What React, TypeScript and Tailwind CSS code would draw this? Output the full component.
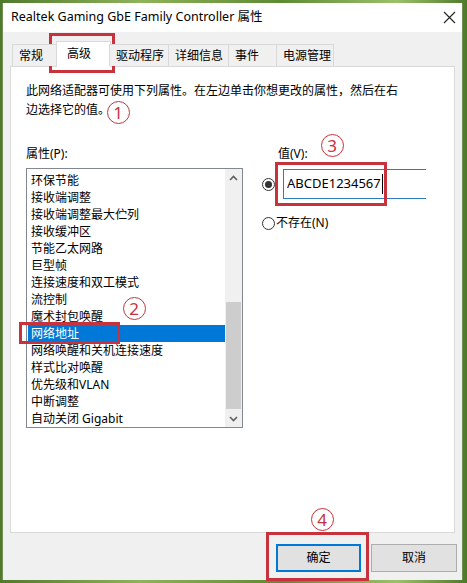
import React from "react"

const items = [
  "环保节能",
  "接收端调整",
  "接收端调整最大伫列",
  "接收缓冲区",
  "节能乙太网路",
  "巨型帧",
  "连接速度和双工模式",
  "流控制",
  "魔术封包唤醒",
  "网络地址",
  "网络唤醒和关机连接速度",
  "样式比对唤醒",
  "优先级和VLAN",
  "中断调整",
  "自动关闭 Gigabit",
]

const font = { fontFamily: '"Noto Sans", "Noto Sans CJK SC", sans-serif' }

function Chevron({ up }: { up?: boolean }) {
  return (
    <svg width="9" height="6" viewBox="0 0 9 6">
      <path
        d={up ? "M1 5 L4.5 1.5 L8 5" : "M1 1 L4.5 4.5 L8 1"}
        fill="none"
        stroke="#606060"
        strokeWidth="1.6"
      />
    </svg>
  )
}

function Radio({ checked }: { checked?: boolean }) {
  return (
    <div className="w-[13px] h-[13px] shrink-0 rounded-full border border-[#333] bg-white flex items-center justify-center">
      {checked && <div className="w-[7px] h-[7px] rounded-full bg-[#333]" />}
    </div>
  )
}

function Mark({ n, x, y }: { n: string; x: number; y: number }) {
  return (
    <div
      className="absolute w-[23px] h-[23px] rounded-full border-[1.5px] border-[#c8323c] flex items-center justify-center text-[17px] leading-none text-[#c8323c]"
      style={{ left: x - 11.5, top: y - 11.5, ...font }}
    >
      {n}
    </div>
  )
}

export default function App() {
  const tabs = [
    { label: "常规", w: "w-[46px]" },
    { label: "高级", w: "w-[55px]", active: true },
    { label: "驱动程序", w: "w-[59px]" },
    { label: "详细信息", w: "w-[60px]" },
    { label: "事件", w: "w-[48px]" },
    { label: "电源管理", w: "w-[58px]" },
  ]

  return (
    <div
      className="relative w-[467px] h-[583px] overflow-hidden bg-[linear-gradient(90deg,#4f7a2c,#8fb35a_30%,#5d8a34_60%,#9cc06a_85%,#4c7a2a)] pt-[3px] pl-[2px]"
      style={font}
    >
      <div className="w-[461px] h-[577px] flex flex-col bg-[#f0f0f0] border-l border-r border-[#6f8f55]">
        {/* title bar */}
        <div className="h-[29px] bg-white flex items-center justify-between pl-[8px] pr-[6px]">
          <span className="text-[12.5px] text-black">
            Realtek Gaming GbE Family Controller 属性
          </span>
          <svg width="13" height="13" viewBox="0 0 13 13">
            <path d="M1 1 L12 12 M12 1 L1 12" stroke="#222" strokeWidth="1.1" />
          </svg>
        </div>

        <div className="flex-1 flex flex-col px-[7px] pt-[9px]">
          {/* tabs */}
          <div className="relative z-10 h-[25px] flex items-end pl-[2px] text-[12px] text-black">
            {tabs.map((t) =>
              t.active ? (
                <div
                  key={t.label}
                  className={`${t.w} h-[26px] -mx-[2px] -mb-px bg-white border border-b-0 border-[#d9d9d9] pl-[10px] pt-[3px]`}
                >
                  {t.label}
                </div>
              ) : (
                <div
                  key={t.label}
                  className={`${t.w} h-[22px] bg-[#f0f0f0] border border-r-0 last:border-r border-b-0 border-[#d9d9d9] flex items-center pl-[6px]`}
                >
                  {t.label}
                </div>
              )
            )}
          </div>

          {/* panel */}
          <div className="h-[467px] bg-white border border-[#d9d9d9] pl-[15px] pt-[14px] text-black">
            <div className="text-[12px] leading-[19px]">
              <div className="w-fit">此网络适配器可使用下列属性。在左边单击你想更改的属性，然后在右</div>
              <div className="w-fit">边选择它的值。</div>
            </div>

            <div className="flex mt-[26px]">
              <div className="w-[217px]">
                <div className="text-[12px] leading-[18px] mb-[5px]">属性(P):</div>
                <div className="h-[260px] border border-[#828790] flex">
                  <div className="flex-1 pt-[3px] pl-px text-[12px] leading-[17px]">
                    {items.map((it) => (
                      <div
                        key={it}
                        className={
                          it === "网络地址"
                            ? "h-[17px] pl-[3px] bg-[#0078d7] text-white"
                            : "h-[17px] pl-[3px]"
                        }
                      >
                        {it}
                      </div>
                    ))}
                  </div>
                  <div className="w-[17px] bg-[#f0f0f0] flex flex-col">
                    <div className="h-[17px] flex items-center justify-center">
                      <Chevron up />
                    </div>
                    <div className="flex-1 pt-[116px] px-px">
                      <div className="h-[107px] bg-[#cdcdcd]" />
                    </div>
                    <div className="h-[17px] flex items-center justify-center">
                      <Chevron />
                    </div>
                  </div>
                </div>
              </div>

              <div className="ml-[19px] flex-1">
                <div className="text-[12px] leading-[18px] ml-[16px]">值(V):</div>
                <div className="flex items-center mt-[6px]">
                  <Radio checked />
                  <div className="ml-[8px] w-[143px] h-[30px] border-l border-t border-b border-[#2f7bbf] flex items-center pl-[3px] text-[13px]">
                    ABCDE1234567
                    <span className="ml-px w-px h-[20px] bg-black" />
                  </div>
                </div>
                <div className="flex items-center mt-[16px] text-[12px] leading-[16px]">
                  <Radio />
                  <span className="ml-[1px]">不存在(N)</span>
                </div>
              </div>
            </div>
          </div>

          {/* buttons */}
          <div className="flex justify-end gap-[10px] mt-[11px] -mr-[2px] text-[12px] text-black">
            <div className="w-[85px] h-[28px] bg-[#e1e1e1] border-2 border-[#0078d7] flex items-center justify-center">
              确定
            </div>
            <div className="w-[86px] h-[28px] bg-[#e1e1e1] border border-[#adadad] flex items-center justify-center">
              取消
            </div>
          </div>
        </div>
      </div>

      {/* annotations */}
      <div className="absolute left-[49px] top-[33px] w-[66px] h-[40px] border-[3px] border-[#c8323c]" />
      <div className="absolute left-[19px] top-[322px] w-[101px] h-[22px] border-[3px] border-[#c8323c]" />
      <div className="absolute left-[275px] top-[162px] w-[112px] h-[44px] border-[3px] border-[#c8323c]" />
      <div className="absolute left-[266px] top-[532px] w-[103px] h-[49px] border-[3px] border-[#c8323c]" />
      <Mark n="1" x={118} y={112} />
      <Mark n="2" x={134} y={308} />
      <Mark n="3" x={332} y={145} />
      <Mark n="4" x={322} y={519} />
    </div>
  )
}
